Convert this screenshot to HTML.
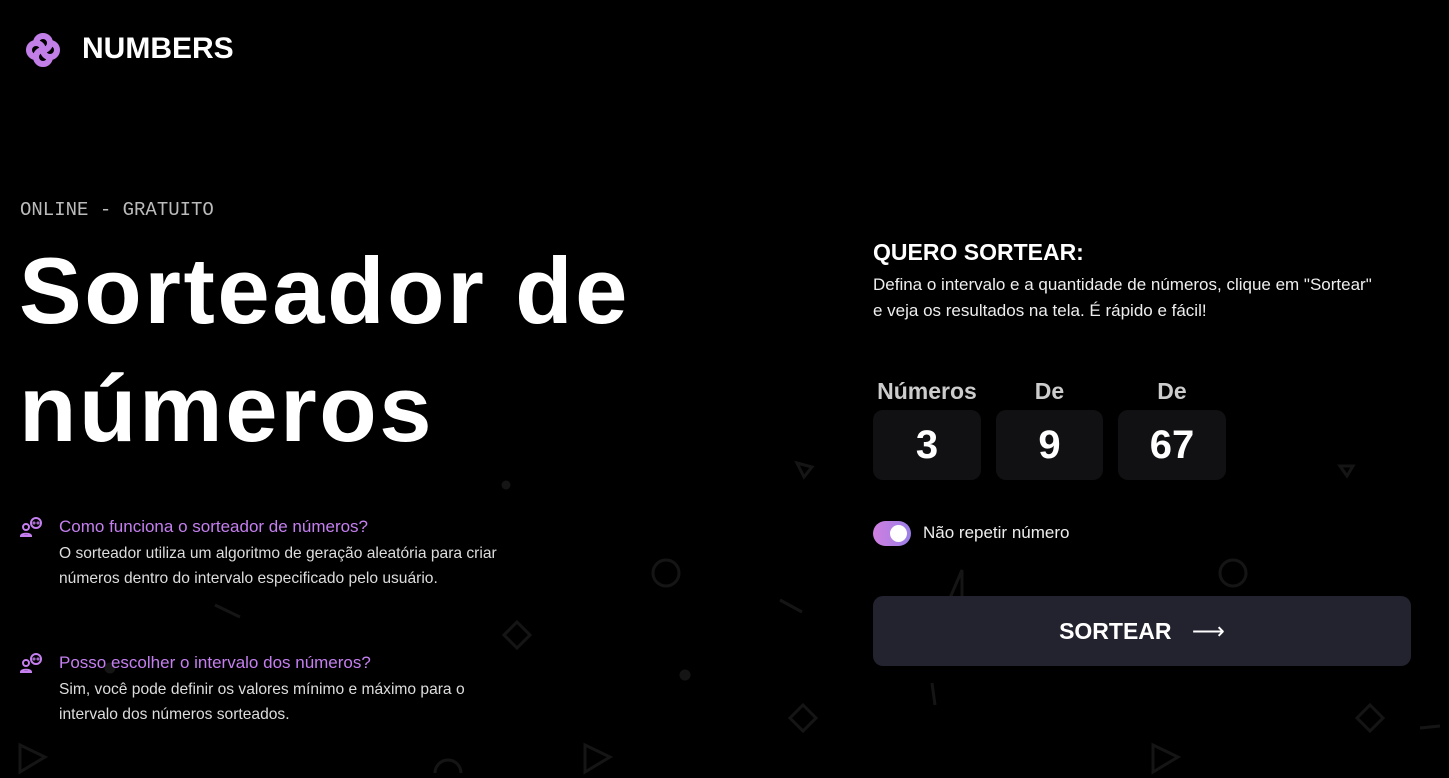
<!DOCTYPE html>
<html><head><meta charset="utf-8"><style>
*{margin:0;padding:0;box-sizing:border-box}
body{width:1449px;height:778px;background:#000;color:#fff;font-family:"Liberation Sans",sans-serif;position:relative;overflow:hidden}
.abs{position:absolute}
.logo{left:82px;top:32px;font-size:30px;font-weight:bold;letter-spacing:0px}
.tag{left:20px;top:199px;font-family:"Liberation Mono",monospace;font-size:19px;color:#bbb}
h1{position:absolute;left:19px;top:232px;font-size:94px;line-height:118px;font-weight:bold;letter-spacing:2.6px}
.q{position:absolute;left:59px;font-size:17px;color:#c57ff0}
.a{position:absolute;left:59px;font-size:15.6px;line-height:25px;color:#ddd}
.lab{position:absolute;top:378px;font-size:23px;font-weight:bold;color:#ccc;text-align:center}
.box{position:absolute;top:410px;height:70px;background:#111113;border-radius:10px;font-size:40px;font-weight:bold;text-align:center;line-height:70px}
</style></head><body>
<svg class="abs" style="left:0;top:0" width="1449" height="778" fill="none" stroke="#151515" stroke-width="3">
<circle cx="666" cy="573" r="13"/><circle cx="1233" cy="573" r="13"/>
<path d="M517 622l13 13-13 13-13-13z"/><path d="M803 705l13 13-13 13-13-13z"/><path d="M1370 705l13 13-13 13-13-13z"/>
<path d="M215 605l25 12"/><path d="M780 600l22 12"/><path d="M932 683l3 22"/><path d="M1420 728l20-2"/>
<path d="M20 745l25 12-25 15z"/><path d="M585 745l25 12-25 15z"/><path d="M1153 745l25 12-25 15z"/>
<path d="M962 570l-12 28h12z"/><path d="M435 773a13 13 0 0 1 26 0"/>
<circle cx="110" cy="668" r="4" fill="#151515"/><circle cx="685" cy="675" r="4" fill="#151515"/><circle cx="506" cy="485" r="3" fill="#151515"/>
<path d="M797 463l15 4-8 10z"/><path d="M1340 466l13 0-6 10z"/>
</svg>
<svg class="abs" style="left:22px;top:29px" width="42" height="42" viewBox="0 0 42 42" fill="none" stroke="#c27fe8" stroke-width="6" stroke-linecap="round">
<path d="M14 14a7 7 0 1 1 7 7"/><path d="M28 14a7 7 0 1 1-7 7"/><path d="M28 28a7 7 0 1 1-7-7"/><path d="M14 28a7 7 0 1 1 7-7"/>
</svg>
<div class="abs logo">NUMBERS</div>
<div class="abs tag">ONLINE - GRATUITO</div>
<h1>Sorteador de<br>números</h1>
<svg class="abs" style="left:20px;top:517px" width="24" height="22" viewBox="0 0 24 22" fill="none" stroke="#c57ff0" stroke-width="2"><circle cx="6" cy="10" r="3"/><path d="M1 19c0-3 10-3 10 0z"/><circle cx="16" cy="6" r="5"/><circle cx="14" cy="6" r=".5"/><circle cx="18" cy="6" r=".5"/></svg>
<svg class="abs" style="left:20px;top:653px" width="24" height="22" viewBox="0 0 24 22" fill="none" stroke="#c57ff0" stroke-width="2"><circle cx="6" cy="10" r="3"/><path d="M1 19c0-3 10-3 10 0z"/><circle cx="16" cy="6" r="5"/><circle cx="14" cy="6" r=".5"/><circle cx="18" cy="6" r=".5"/></svg>
<div class="q" style="top:517px">Como funciona o sorteador de números?</div>
<div class="a" style="top:541px">O sorteador utiliza um algoritmo de geração aleatória para criar<br>números dentro do intervalo especificado pelo usuário.</div>
<div class="q" style="top:653px">Posso escolher o intervalo dos números?</div>
<div class="a" style="top:677px">Sim, você pode definir os valores mínimo e máximo para o<br>intervalo dos números sorteados.</div>
<div class="abs" style="left:873px;top:239px;font-size:23px;font-weight:bold">QUERO SORTEAR:</div>
<div class="abs" style="left:873px;top:272px;font-size:17px;line-height:26px;color:#eee;white-space:nowrap">Defina o intervalo e a quantidade de números, clique em "Sortear"<br>e veja os resultados na tela. É rápido e fácil!</div>
<div class="lab" style="left:873px;width:108px">Números</div>
<div class="lab" style="left:996px;width:107px">De</div>
<div class="lab" style="left:1118px;width:108px">De</div>
<div class="box" style="left:873px;width:108px">3</div>
<div class="box" style="left:996px;width:107px">9</div>
<div class="box" style="left:1118px;width:108px">67</div>
<div class="abs" style="left:873px;top:521px;width:38px;height:25px;border-radius:13px;background:linear-gradient(90deg,#d07fe0,#9a7fe8)"><div style="position:absolute;right:4px;top:4px;width:17px;height:17px;border-radius:50%;background:#fff"></div></div>
<div class="abs" style="left:923px;top:523px;font-size:17px;color:#eee">Não repetir número</div>
<div class="abs" style="left:873px;top:596px;width:538px;height:70px;background:#23222f;border-radius:10px;text-align:center;line-height:70px;font-size:23px;font-weight:bold">SORTEAR <span style="font-weight:normal;margin-left:14px">⟶</span></div>
</body></html>
